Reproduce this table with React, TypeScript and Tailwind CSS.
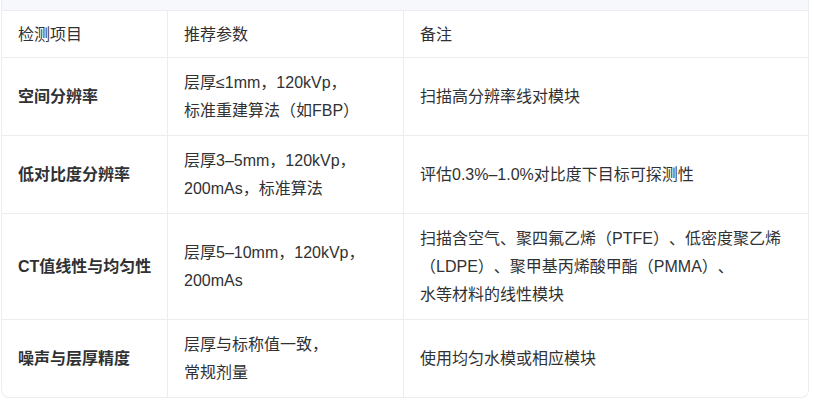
import React from 'react'

type Row = {
  item: string
  params: string[]
  note: string[]
  h: string
}

const rows: Row[] = [
  {
    item: '空间分辨率',
    params: ['层厚≤1mm，120kVp，', '标准重建算法（如FBP）'],
    note: ['扫描高分辨率线对模块'],
    h: 'h-[78px]',
  },
  {
    item: '低对比度分辨率',
    params: ['层厚3–5mm，120kVp，', '200mAs，标准算法'],
    note: ['评估0.3%–1.0%对比度下目标可探测性'],
    h: 'h-[78px]',
  },
  {
    item: 'CT值线性与均匀性',
    params: ['层厚5–10mm，120kVp，', '200mAs'],
    note: [
      '扫描含空气、聚四氟乙烯（PTFE）、低密度聚乙烯',
      '（LDPE）、聚甲基丙烯酸甲酯（PMMA）、',
      '水等材料的线性模块',
    ],
    h: 'h-[106px]',
  },
  {
    item: '噪声与层厚精度',
    params: ['层厚与标称值一致，', '常规剂量'],
    note: ['使用均匀水模或相应模块'],
    h: 'h-[77px]',
  },
]

const Lines = ({ lines }: { lines: string[] }) => (
  <div>
    {lines.map((l, i) => (
      <div key={i} className="whitespace-nowrap">
        {l}
      </div>
    ))}
  </div>
)

export default function App() {
  return (
    <div
      className="h-[404px] w-[814px] bg-white text-[16px] leading-[28px] text-[#303133] [text-spacing-trim:space-all]"
      style={{ fontFamily: '"Liberation Sans", "Noto Sans CJK SC", sans-serif' }}
    >
      <div className="ml-px w-[808px] overflow-hidden rounded-b-lg border-x border-b border-[#ebedf0]">
        <div className="h-[11px] border-b border-[#ebedf0] bg-[#f7f8fc]" />

        <div className="grid grid-cols-[166px_236px_1fr]">
          {['检测项目', '推荐参数', '备注'].map((t, i) => (
            <div
              key={t}
              className={`flex h-[47px] items-center border-b border-[#ebedf0] px-4 pt-[2px] ${
                i < 2 ? 'border-r' : ''
              }`}
            >
              {t}
            </div>
          ))}

          {rows.map((r, idx) => {
            const last = idx === rows.length - 1
            const rowCls = `${r.h} flex items-center px-4 ${
              last ? '' : 'border-b'
            } border-[#ebedf0]`
            return (
              <React.Fragment key={r.item}>
                <div className={`${rowCls} whitespace-nowrap border-r font-bold`}>{r.item}</div>
                <div className={`${rowCls} border-r`}>
                  <Lines lines={r.params} />
                </div>
                <div className={rowCls}>
                  <Lines lines={r.note} />
                </div>
              </React.Fragment>
            )
          })}
        </div>
      </div>
    </div>
  )
}
